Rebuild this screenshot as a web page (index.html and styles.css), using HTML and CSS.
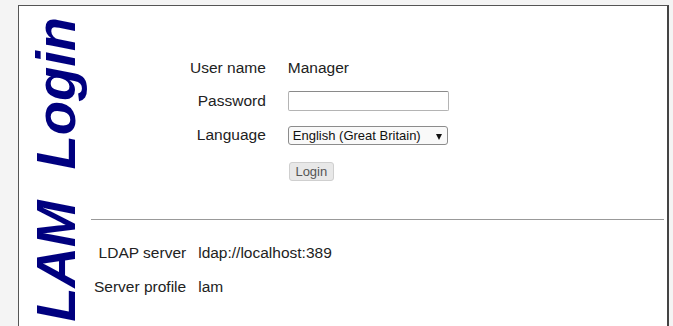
FILE: index.html
```html
<!DOCTYPE html>
<html lang="en">
<head>
  <meta charset="UTF-8" />
  <title>LAM Login</title>
  <link rel="stylesheet" href="styles.css">
</head>
<body>
  <div class="login-box">
    <div class="side">
      <div class="side-title">LAM&nbsp;&nbsp;Login</div>
    </div>

    <div class="main">
      <!-- Login form -->
      <form class="login-form" onsubmit="return false;">
        <div class="label">User name</div>
        <div class="value">Manager</div>

        <div class="label">Password</div>
        <div class="value"><input type="password" class="text-input"></div>

        <div class="label">Language</div>
        <div class="value">
          <span class="select-wrap">
            <select class="lang-select">
              <option>English (Great Britain)</option>
            </select>
          </span>
        </div>

        <div></div>
        <div class="value"><button class="login-btn">Login</button></div>
      </form>

      <hr class="divider">

      <!-- Server info -->
      <div class="server-info">
        <div class="label">LDAP server</div>
        <div class="value">ldap://localhost:389</div>
        <div class="label">Server profile</div>
        <div class="value">lam</div>
      </div>
    </div>
  </div>
</body>
</html>
```

FILE: styles.css
```css
* { box-sizing: border-box; }
body {
  margin: 0;
  background-color: #f4f4f4;
  font-family: "Liberation Sans", Arial, sans-serif;
  color: #222;
  overflow: hidden;
}
.login-box {
  display: flex;
  margin: 5px 4px 0 18px;
  height: calc(100vh - 5px);
  background-color: white;
  border: 1px solid #555;
  border-right: 2px solid #444;
  border-bottom: none;
}
.side { width: 72px; flex-shrink: 0; padding: 11px 0 0 9px; }
.side-title {
  writing-mode: vertical-rl;
  transform: rotate(180deg);
  font-size: 56px;
  line-height: 56px;
  font-weight: bold;
  font-style: italic;
  color: #00007f;
  white-space: nowrap;
}
.main { flex: 1; padding-top: 45px; padding-right: 3px; }
.login-form {
  display: grid;
  grid-template-columns: auto auto;
  grid-template-rows: 33px 34px 34px 38px;
  column-gap: 22px;
  align-items: center;
  justify-content: start;
  margin-left: 99px;
  font-size: 15.5px;
}
.label { text-align: right; }
.text-input {
  display: block;
  width: 161px;
  height: 20px;
  border: 1px solid #b4b4b4;
  border-top-color: #8a8a8a;
  border-radius: 2px;
  background: white;
}
.select-wrap { position: relative; display: inline-block; }
.select-wrap::after {
  content: "";
  position: absolute;
  right: 6px;
  top: 8px;
  border-left: 3.5px solid transparent;
  border-right: 3.5px solid transparent;
  border-top: 6px solid #111;
  pointer-events: none;
}
.lang-select {
  appearance: none;
  display: block;
  width: 160px;
  height: 19px;
  padding: 0 0 0 4px;
  border: 1px solid #8c8c8c;
  border-radius: 3px;
  background: #f9f9f9;
  font-family: "Liberation Sans", Arial, sans-serif;
  font-size: 13px;
  color: #111;
}
.login-btn {
  display: block;
  margin-left: 1px;
  width: 45px;
  height: 19px;
  padding: 0;
  border: 1px solid #cfcfcf;
  border-radius: 3px;
  background: #e8e8e8;
  font-family: "Liberation Sans", Arial, sans-serif;
  font-size: 13px;
  color: #555;
}
.divider {
  margin: 29px 0 0 0;
  border: none;
  border-top: 1px solid #999;
}
.server-info {
  display: grid;
  grid-template-columns: auto auto;
  grid-auto-rows: 34px;
  column-gap: 12px;
  align-items: center;
  justify-content: start;
  margin-top: 16px;
  margin-left: 3px;
  font-size: 15.5px;
}
```
